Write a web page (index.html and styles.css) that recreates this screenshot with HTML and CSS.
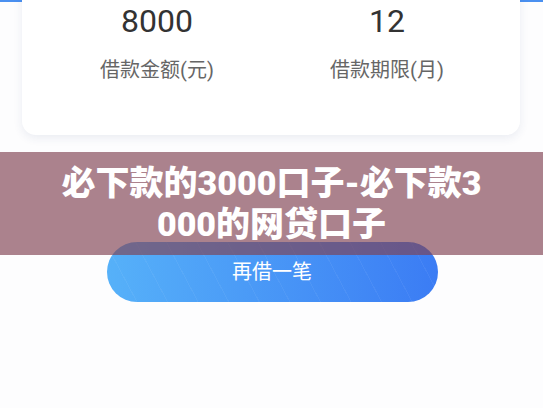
FILE: index.html
```html
<!DOCTYPE html>
<html lang="zh-CN">
<head>
<meta charset="utf-8">
<title>必下款的3000口子-必下款3000的网贷口子</title>
<link rel="stylesheet" href="styles.css">
</head>
<body>
<div class="page">
  <div class="head-band"></div>

  <div class="loan-card">
    <div class="loan-col">
      <div class="loan-num">8000</div>
      <div class="loan-label">借款金额(元)</div>
    </div>
    <div class="loan-col">
      <div class="loan-num">12</div>
      <div class="loan-label">借款期限(月)</div>
    </div>
  </div>

  <div class="btn-wrap">
    <a class="btn-again" href="#">再借一笔</a>
  </div>

  <div class="title-bar">
    <h1 class="title-text">必下款的3000口子-必下款3000的网贷口子</h1>
  </div>
</div>
</body>
</html>
```

FILE: styles.css
```css
html, body {margin: 0; padding: 0;}
body {background: #fdfdfe; font-family: Roboto, "Noto Sans CJK SC", sans-serif; width: 543px; height: 408px; overflow: hidden;}

.page {position: relative; height: 408px;}

/* blue header behind the card, only its bottom edge shows */
.head-band {height: 2px; background: #4a90f0;}

.loan-card {
  position: relative;
  margin: -22px 23px 0 22px;
  padding: 21px 18px 51px 20px;
  background: #fff;
  border-radius: 14px;
  box-shadow: 0 3px 10px rgba(40, 70, 120, 0.09);
  display: grid;
  grid-template-columns: 1fr 1fr;
}
.loan-col {text-align: center;}
.loan-num {font-size: 32px; line-height: 40px; color: #333;}
.loan-label {margin-top: 15px; font-size: 20px; line-height: 28px; color: #666;}

.btn-wrap {display: flex; justify-content: center; margin-top: 107px; padding-left: 1px;}
.btn-again {
  display: block;
  width: 331px;
  height: 60px;
  line-height: 60px;
  border-radius: 30px;
  text-align: center;
  font-size: 20px;
  color: #fff;
  text-decoration: none;
  background:
    repeating-linear-gradient(62deg, rgba(255,255,255,0) 0 26px, rgba(255,255,255,0.05) 26px 27px),
    linear-gradient(90deg, #56b1f9, #3b7cf4);
}

/* translucent caption laid over the page */
.title-bar {
  position: absolute;
  left: 0;
  right: 0;
  top: 152px;
  height: 103px;
  background: rgba(127, 64, 80, 0.65);
  display: flex;
  align-items: center;
  justify-content: center;
}
.title-text {
  margin: 0;
  width: 424px;
  font-size: 34px;
  line-height: 41px;
  font-weight: 900;
  color: #fff;
  text-align: center;
  word-break: break-all;
}
```
